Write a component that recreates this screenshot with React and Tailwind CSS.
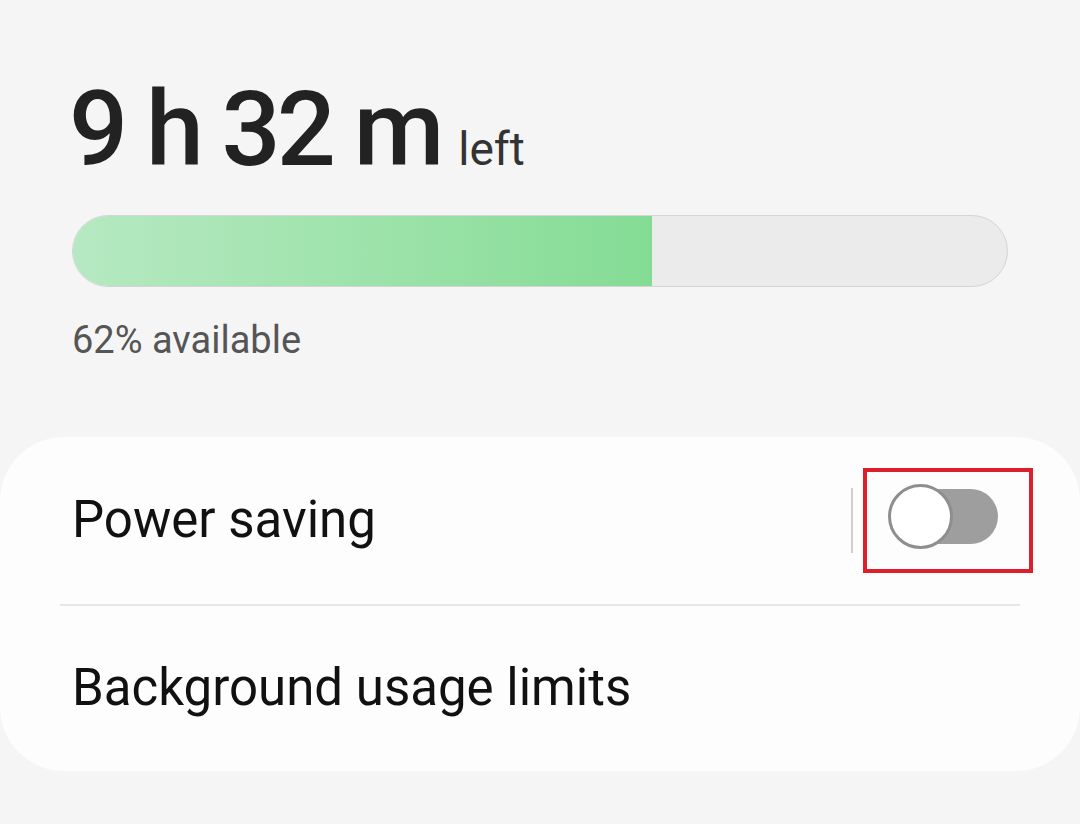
import React from "react";

function Toggle() {
  return (
    <div className="relative w-[110px] h-[65px]">
      <div className="absolute right-0 top-[5px] h-[55px] w-[96px] rounded-full bg-[#9e9e9e]" />
      <div className="absolute left-0 top-0 h-[65px] w-[65px] rounded-full bg-white border-[3px] border-[#8e8e8e]" />
    </div>
  );
}

export default function App() {
  const percent = 62;

  return (
    <div
      className="w-[1080px] h-[824px] bg-[#f5f5f5] overflow-hidden"
      style={{ fontFamily: "Roboto, 'Noto Sans', sans-serif" }}
    >
      <div className="px-[72px] pt-[78px]">
        <div className="flex items-baseline leading-none -ml-[3px]">
          <span className="text-[104px] font-medium tracking-[-4px] text-[#222]">9 h 32 m</span>
          <span className="ml-[18px] text-[46px] text-[#333]">left</span>
        </div>

        <div className="mt-[33px] w-[936px] h-[72px] rounded-full border border-[#d4d4d4] bg-[#ebebeb] overflow-hidden">
          <div
            className="h-full bg-gradient-to-r from-[#b6e9c2] to-[#84dc94]"
            style={{ width: `${percent}%` }}
          />
        </div>

        <p className="mt-[34px] text-[38px] leading-none text-[#555]">{percent}% available</p>
      </div>

      <div className="mt-[78px] bg-[#fdfdfd] rounded-[64px]">
        <div className="flex items-center justify-between h-[167px] pl-[72px] pr-[47px]">
          <span className="text-[51px] text-[#111]">Power saving</span>
          <div className="flex items-center">
            <div className="w-[2px] h-[65px] bg-[#cfcfcf]" />
            <div className="ml-[10px] border-4 border-[#dc1f2b] pl-[21px] pr-[31px] pt-[12px] pb-[20px]">
              <Toggle />
            </div>
          </div>
        </div>
        <div className="mx-[60px] h-[2px] bg-[#e6e6e6]" />
        <div className="flex items-center h-[165px] pl-[72px]">
          <span className="text-[51px] text-[#111]">Background usage limits</span>
        </div>
      </div>
    </div>
  );
}
